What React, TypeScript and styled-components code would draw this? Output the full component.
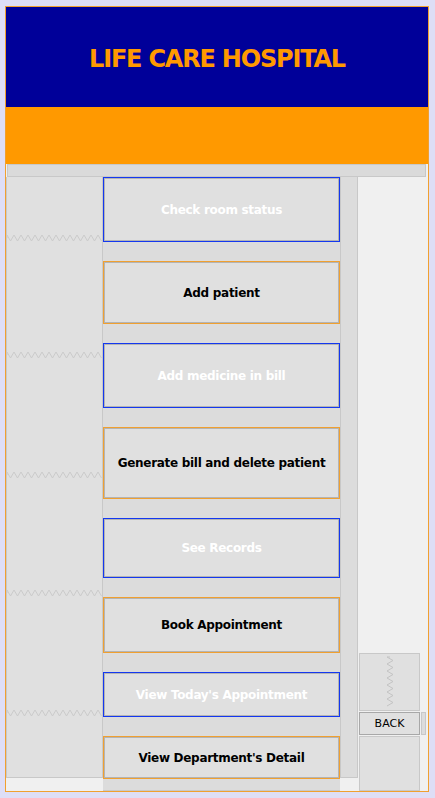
import styled, { createGlobalStyle } from 'styled-components';

const GlobalStyle = createGlobalStyle`
  html, body {
    margin: 0;
    padding: 0;
    background: #dedef6;
  }
  * {
    box-sizing: border-box;
  }
`;

interface MenuItem {
  label: string;
  height: number;
  accent: 'blue' | 'orange';
}

const items: MenuItem[] = [
  { label: 'Check room status', height: 65, accent: 'blue' },
  { label: 'Add patient', height: 63, accent: 'orange' },
  { label: 'Add medicine in bill', height: 65, accent: 'blue' },
  { label: 'Generate bill and delete patient', height: 72, accent: 'orange' },
  { label: 'See Records', height: 60, accent: 'blue' },
  { label: 'Book Appointment', height: 56, accent: 'orange' },
  { label: "View Today's Appointment", height: 45, accent: 'blue' },
  { label: "View Department's Detail", height: 43, accent: 'orange' },
];

// y offsets of the squeeze marks inside the left panel
const leftZigzags = [61, 178, 298, 416, 536];

const Page = styled.div`
  height: 798px;
  padding: 6px 6px 6px 5px;
  background: #dedef6;
`;

const Frame = styled.div`
  width: 424px;
  height: 786px;
  border: 1px solid #f0a030;
  display: flex;
  flex-direction: column;
  background: #f0f0f0;
`;

const Header = styled.div`
  height: 100px;
  background: #000099;
  display: flex;
  align-items: center;
  justify-content: center;
`;

const Title = styled.h1`
  margin: 0;
  padding-top: 3px;
  color: #ff9900;
  font-family: Tahoma, "DejaVu Sans", sans-serif;
  font-size: 24px;
  font-weight: bold;
  letter-spacing: -1.2px;
`;

const Band = styled.div`
  height: 57px;
  background: #ff9900;
`;

const Content = styled.div`
  flex: 1;
  display: flex;
  flex-direction: column;
`;

const TopStrip = styled.div`
  height: 13px;
  margin: 0 2px 0 1px;
  background: #dadada;
  border: 1px solid #c8c8c8;
`;

const Row = styled.div`
  flex: 1;
  display: flex;
  align-items: flex-start;
`;

const SidePanel = styled.div`
  width: 97px;
  height: 601px;
  background: #e0e0e0;
  border: 1px solid #c8c8c8;
  border-top: none;
`;

const ButtonColumn = styled.div`
  width: 237px;
  align-self: stretch;
  display: flex;
  flex-direction: column;
  gap: 19px;
  background: #dcdcdc;
  border-bottom: 1px solid #c8c8c8;
`;

const MenuButton = styled.button<{ $accent: 'blue' | 'orange' }>`
  width: 100%;
  margin: 0;
  padding: 0;
  background: #e0e0e0;
  border: 1px solid ${p => (p.$accent === 'blue' ? '#1438f0' : '#f0a030')};
  box-shadow: inset 0 0 0 1px #b4b4b4;
  color: ${p => (p.$accent === 'blue' ? '#ffffff' : '#000000')};
  font-family: Tahoma, "DejaVu Sans", sans-serif;
  font-size: 12px;
  font-weight: bold;
  letter-spacing: -0.3px;
  cursor: pointer;
`;

const ScrollTrack = styled.div`
  width: 18px;
  height: 601px;
  background: #dcdcdc;
  border: 1px solid #c8c8c8;
  border-top: none;
`;

const RightArea = styled.div`
  flex: 1;
  align-self: stretch;
  display: flex;
  flex-direction: column;
  justify-content: flex-end;
  gap: 1px;
  padding-left: 1px;
`;

const SmallPanel = styled.div<{ $h: number }>`
  width: 61px;
  height: ${p => p.$h}px;
  background: #e0e0e0;
  border: 1px solid #c8c8c8;
  display: flex;
  justify-content: center;
  align-items: center;
`;

const BackRow = styled.div`
  display: flex;
  gap: 1px;
  height: 23px;
`;

const BackButton = styled.button`
  width: 61px;
  height: 23px;
  margin: 0;
  padding: 0;
  background: #e0e0e0;
  border: 1px solid #a8a8a8;
  color: #000;
  font-family: Tahoma, "DejaVu Sans", sans-serif;
  font-size: 11px;
`;

const Nub = styled.div`
  width: 5px;
  height: 23px;
  background: #dcdcdc;
  border: 1px solid #c8c8c8;
`;

const zigzagH = (y: number, width: number) => {
  let d = `M0 ${y}`;
  for (let x = 0; x <= width; x += 3.5) {
    const up = Math.round(x / 3.5) % 2 === 0;
    d += ` L${x} ${up ? y - 3 : y + 3}`;
  }
  return d;
};

const zigzagV = (x: number, top: number, bottom: number) => {
  let d = `M${x} ${top}`;
  for (let y = top; y <= bottom; y += 3.5) {
    const left = Math.round((y - top) / 3.5) % 2 === 0;
    d += ` L${left ? x - 3 : x + 3} ${y}`;
  }
  return d;
};

export default function App() {
  return (
    <Page>
      <GlobalStyle />
      <Frame>
        <Header>
          <Title>LIFE CARE HOSPITAL</Title>
        </Header>
        <Band />
        <Content>
          <TopStrip />
          <Row>
            <SidePanel>
              <svg width="95" height="600">
                {leftZigzags.map(y => (
                  <path key={y} d={zigzagH(y, 95)} fill="none" stroke="#cbcbcb" strokeWidth="1" />
                ))}
              </svg>
            </SidePanel>
            <ButtonColumn>
              {items.map(item => (
                <MenuButton key={item.label} $accent={item.accent} style={{ height: item.height }}>
                  {item.label}
                </MenuButton>
              ))}
            </ButtonColumn>
            <ScrollTrack />
            <RightArea>
              <SmallPanel $h={58}>
                <svg width="20" height="54">
                  <path d={zigzagV(10, 2, 52)} fill="none" stroke="#c4c4c4" strokeWidth="1" />
                </svg>
              </SmallPanel>
              <BackRow>
                <BackButton>BACK</BackButton>
                <Nub />
              </BackRow>
              <SmallPanel $h={55} />
            </RightArea>
          </Row>
        </Content>
      </Frame>
    </Page>
  );
}
